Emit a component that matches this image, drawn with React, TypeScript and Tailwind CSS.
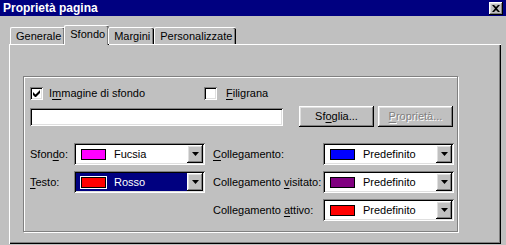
import React from 'react'

const raised =
  'shadow-[inset_-1px_-1px_#000,inset_1px_1px_#fff,inset_-2px_-2px_#808080,inset_2px_2px_#dfdfdf]'
const sunken =
  'shadow-[inset_1px_1px_#808080,inset_-1px_-1px_#fff,inset_2px_2px_#000,inset_-2px_-2px_#dfdfdf]'

function U({ children }: { children: React.ReactNode }) {
  return <span className="underline underline-offset-[2px]">{children}</span>
}

function Arrow() {
  return (
    <svg width="7" height="4" viewBox="0 0 7 4">
      <path d="M0 0h7L3.5 4z" fill="#000" />
    </svg>
  )
}

function Combo({ color, text, selected }: { color: string; text: string; selected?: boolean }) {
  return (
    <div className={`w-[131px] h-[22px] bg-white flex items-center p-[2px] ${sunken}`}>
      <div
        className={`flex-1 h-full flex items-center pl-[4px] ${
          selected ? 'bg-[#000080] text-white' : 'text-black'
        }`}
      >
        <div className={`p-px ${selected ? 'bg-white' : ''}`}>
          <div className="w-[25px] h-[11px] border border-black" style={{ background: color }} />
        </div>
        <span className="ml-[7px]">{text}</span>
      </div>
      <div className={`w-[16px] h-[18px] bg-[#c0c0c0] flex items-center justify-center ${raised}`}>
        <Arrow />
      </div>
    </div>
  )
}

function Check({ checked }: { checked?: boolean }) {
  return (
    <div className={`w-[13px] h-[13px] bg-white flex items-center justify-center ${sunken}`}>
      {checked && (
        <svg width="7" height="7" viewBox="0 0 7 7">
          <path d="M0 2v3l2 2h1l4-4V0L2.5 4.5z" fill="#000" />
        </svg>
      )}
    </div>
  )
}

export default function App() {
  return (
    <div
      className="w-[506px] h-[245px] bg-[#c0c0c0] overflow-hidden text-[11px] text-black leading-none"
      style={{ fontFamily: '"Liberation Sans", Arial, sans-serif' }}
    >
      {/* Barra titolo */}
      <div className="h-[16px] bg-[#000080] flex items-center justify-between pl-[3px] pr-[3px]">
        <span className="text-white font-bold text-[12px]">Proprietà pagina</span>
        <div className={`w-[14px] h-[13px] bg-[#c0c0c0] flex items-center justify-center ${raised}`}>
          <svg width="8" height="7" viewBox="0 0 8 7">
            <path d="M0 0h2l2 2 2-2h2L5 3.5 8 7H6L4 5 2 7H0l3-3.5z" fill="#000" />
          </svg>
        </div>
      </div>

      {/* Schede */}
      <div className="flex items-end pl-[10px] mt-[9px] h-[19px] relative z-10">
        {['Generale', 'Sfondo', 'Margini', 'Personalizzate'].map((t) =>
          t === 'Sfondo' ? (
            <div
              key={t}
              className="-mx-[1px] h-[20px] -mb-px pl-[5px] pr-[4px] pt-[3px] bg-[#c0c0c0] rounded-t-[2px] border-t border-l border-white shadow-[inset_-1px_0_#000,inset_-2px_0_#808080]"
            >
              {t}
            </div>
          ) : (
            <div
              key={t}
              className="h-[17px] pl-[5px] pr-[4px] pt-[3px] rounded-t-[2px] border-t border-l border-white shadow-[inset_-1px_0_#000,inset_-2px_0_#808080]"
            >
              {t}
            </div>
          )
        )}
      </div>

      {/* Pannello */}
      <div className="ml-[9px] w-[492px] h-[200px] border-t border-l border-white shadow-[inset_-1px_-1px_#000,inset_-2px_-2px_#808080] pl-[13px] pt-[31px]">
        <div className="w-[435px] h-[156px] border border-[#808080] shadow-[inset_1px_1px_#fff,1px_1px_#fff] pl-[6px] pt-[10px]">
          <div className="flex items-center h-[13px]">
            <div className="w-[174px] flex items-center">
              <Check checked />
              <span className="ml-[6px]">
                I<U>m</U>magine di sfondo
              </span>
            </div>
            <Check />
            <span className="ml-[9px]">
              <U>F</U>iligrana
            </span>
          </div>

          <div className="flex items-center mt-[6px]">
            <div className={`w-[253px] h-[18px] bg-white ${sunken}`} />
            <div className={`ml-[16px] w-[75px] h-[21px] flex items-center justify-center ${raised}`}>
              Sf<U>o</U>glia...
            </div>
            <div
              className={`ml-[4px] w-[75px] h-[21px] flex items-center justify-center text-[#808080] [text-shadow:1px_1px_#fff] ${raised}`}
            >
              <U>P</U>roprietà...
            </div>
          </div>

          <div className="mt-[16px] flex flex-col gap-[6px]">
            <div className="flex items-center">
              <span className="w-[44px]">
                Sfon<U>d</U>o:
              </span>
              <Combo color="#ff00ff" text="Fucsia" />
              <span className="ml-[8px] w-[110px]">
                <U>C</U>ollegamento:
              </span>
              <Combo color="#0000ff" text="Predefinito" />
            </div>
            <div className="flex items-center">
              <span className="w-[44px]">
                <U>T</U>esto:
              </span>
              <Combo color="#ff0000" text="Rosso" selected />
              <span className="ml-[8px] w-[110px]">
                Collegamento <U>v</U>isitato:
              </span>
              <Combo color="#800080" text="Predefinito" />
            </div>
            <div className="flex items-center">
              <span className="w-[44px]" />
              <div className="w-[131px]" />
              <span className="ml-[8px] w-[110px]">
                Collegamento <U>a</U>ttivo:
              </span>
              <Combo color="#ff0000" text="Predefinito" />
            </div>
          </div>
        </div>
      </div>
    </div>
  )
}
